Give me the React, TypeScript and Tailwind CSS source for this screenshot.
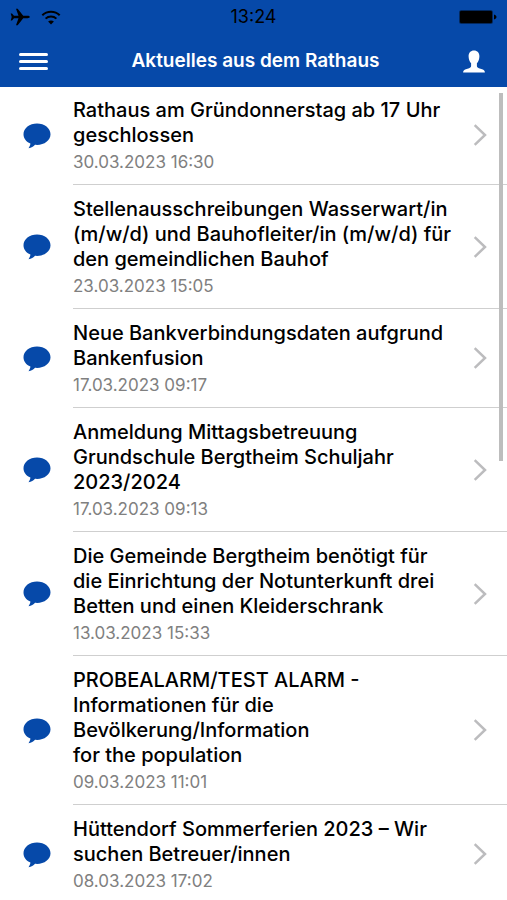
type NewsItem = { title: string; date: string };

const news: NewsItem[] = [
  { title: "Rathaus am Gründonnerstag ab 17 Uhr geschlossen", date: "30.03.2023 16:30" },
  {
    title: "Stellenausschreibungen Wasserwart/in (m/w/d) und Bauhofleiter/in (m/w/d) für den gemeindlichen Bauhof",
    date: "23.03.2023 15:05",
  },
  { title: "Neue Bankverbindungsdaten aufgrund Bankenfusion", date: "17.03.2023 09:17" },
  { title: "Anmeldung Mittagsbetreuung Grundschule Bergtheim Schuljahr 2023/2024", date: "17.03.2023 09:13" },
  {
    title: "Die Gemeinde Bergtheim benötigt für die Einrichtung der Notunterkunft drei Betten und einen Kleiderschrank",
    date: "13.03.2023 15:33",
  },
  {
    title: "PROBEALARM/TEST ALARM -\nInformationen für die Bevölkerung/Information\nfor the population",
    date: "09.03.2023 11:01",
  },
  { title: "Hüttendorf Sommerferien 2023 – Wir suchen Betreuer/innen", date: "08.03.2023 17:02" },
];

function PlaneIcon() {
  return (
    <svg viewBox="0 0 20 18" className="h-[18px] w-5" fill="#000" aria-hidden="true">
      <path d="M19.800 9c0-.7-1-1.200-2.200-1.200h-4.400L7.700.8H6l2.500 7H4L2 5.600H.7L1.700 9 .7 12.400H2l2-2.200h4.500l-2.500 7h1.700l5.500-7h4.400c1.200 0 2.200-.5 2.200-1.200z" />
    </svg>
  );
}

function WifiIcon() {
  return (
    <svg viewBox="0 0 20 15" className="h-[15px] w-5" fill="none" stroke="#000" strokeWidth="2" aria-hidden="true">
      <path d="M1.300 5.300C6 .6 14 .6 18.700 5.300" />
      <path d="M4.600 8.600c3-2.900 7.800-2.900 10.800 0" />
      <path d="M10 14.500 7.100 11.500c1.600-1.500 4.200-1.500 5.800 0z" fill="#000" stroke="none" />
    </svg>
  );
}

function BatteryIcon() {
  return (
    <svg viewBox="0 0 38 14" className="h-[14px] w-[38px]" aria-hidden="true">
      <rect x="0" y="0" width="34" height="14" rx="2.500" fill="#000" fillOpacity=".45" />
      <rect x="1" y="1" width="32" height="12" rx="1" fill="#000" />
      <path d="M35 4.500c1.500.5 2.500 1.300 2.500 2.500S36.500 9 35 9.500z" fill="#000" />
    </svg>
  );
}

function BubbleIcon() {
  return (
    <svg viewBox="0 0 28 26" className="h-[26px] w-7 shrink-0" fill="#0649a9" aria-hidden="true">
      <path d="M14 .5C6.600.5.500 5.200.500 11.200c0 4 2.700 7.500 6.900 9.400-.1 1.500-.8 3-1.900 4.700 2.900-.5 5-1.700 6.500-3.500.6.1 1.300.1 2 .1 7.500 0 13.500-4.700 13.500-10.700S21.500.5 14 .5z" />
    </svg>
  );
}

function ChevronIcon() {
  return (
    <svg viewBox="0 0 14 22" className="h-[22px] w-[14px] shrink-0" fill="none" stroke="#bcbcbe" strokeWidth="2.500" aria-hidden="true">
      <path d="M1.700 1.200 12 11 1.700 20.800" />
    </svg>
  );
}

export default function App() {
  return (
    <div className="relative h-screen overflow-hidden bg-white font-['Inter','Liberation_Sans',sans-serif]">
      <header className="h-[87px] bg-[#0649a9]">
        <div className="grid h-[34px] grid-cols-3 items-center px-[10px]">
          <div className="flex items-center gap-[11px]">
            <PlaneIcon />
            <WifiIcon />
          </div>
          <time className="text-center text-[18px] leading-5 text-black">13:24</time>
          <div className="flex justify-end">
            <BatteryIcon />
          </div>
        </div>
        <div className="flex h-[53px] items-center justify-between pt-px pr-[22px] pl-[19px]">
          <button type="button" aria-label="Menü" className="flex w-[29px] flex-col gap-1">
            <span className="h-[3px] w-full rounded-full bg-white" />
            <span className="h-[3px] w-full rounded-full bg-white" />
            <span className="h-[3px] w-full rounded-full bg-white" />
          </button>
          <h1 className="text-[19px] leading-6 font-semibold text-white">Aktuelles aus dem Rathaus</h1>
          <button type="button" aria-label="Profil">
            <svg viewBox="0 0 22 23" className="h-[23px] w-[22px]" fill="#fff" aria-hidden="true">
              <path d="M11 .4c3.400 0 5.400 2.300 5.400 5.900 0 2.900-1 5.400-2.500 7v2.800c0 1.100.7 1.700 2 2.200l3.200 1c1.900.6 2.700 1.400 2.800 3.300H.1c.1-1.900.9-2.700 2.800-3.300l3.200-1c1.300-.5 2-1.100 2-2.200v-2.800c-1.500-1.600-2.500-4.100-2.500-7C5.600 2.700 7.600.4 11 .4z" />
            </svg>
          </button>
        </div>
      </header>
      <main>
        <ul className="-mt-px">
          {news.map((item) => (
            <li key={item.date}>
              <a href="#" className="flex items-center pl-[23px]">
                <BubbleIcon />
                <div className="ml-[22px] flex flex-1 items-center border-b border-[#cfcfcf] py-3 pr-5">
                  <div className="flex-1 pr-[18px]">
                    <h2 className="text-[20px] leading-[25px] font-medium whitespace-pre-line text-black">{item.title}</h2>
                    <p className="mt-1 text-[17px] leading-5 text-[#808080]">{item.date}</p>
                  </div>
                  <ChevronIcon />
                </div>
              </a>
            </li>
          ))}
        </ul>
      </main>
      <div className="absolute top-[93px] right-1 h-[368px] w-[4px] bg-[#bdbdbd]" />
    </div>
  );
}
